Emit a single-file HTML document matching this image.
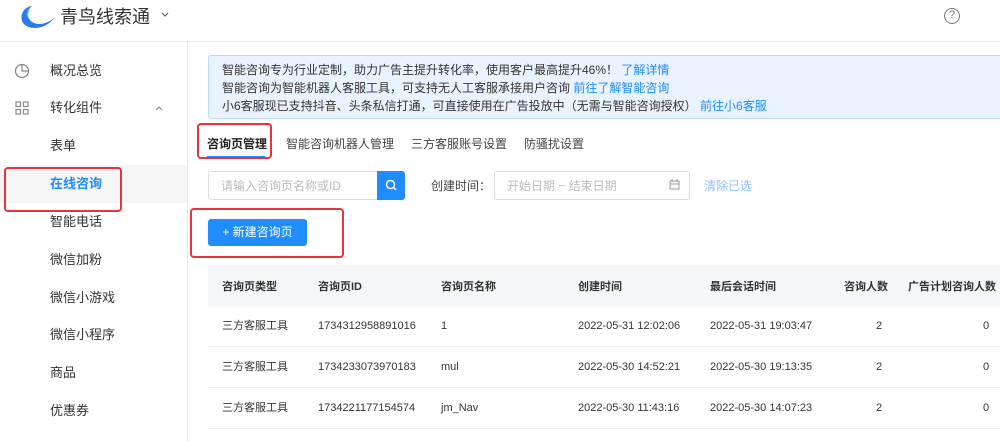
<!DOCTYPE html>
<html><head><meta charset="utf-8"><style>
*{margin:0;padding:0;box-sizing:border-box}
body{width:1000px;height:438px;overflow:hidden;background:#fff;font-family:"Liberation Sans","Noto Sans CJK SC",sans-serif;color:#333;position:relative;font-size:12px}
.a{position:absolute;white-space:nowrap;line-height:16px}
.red{position:absolute;border:2.5px solid #e8323c;border-radius:4px}
</style></head><body>
<div class="a" style="left:0;top:41px;width:1000px;border-top:1px solid #e8e8e8"></div>
<div class="a" style="left:187px;top:41px;height:400px;border-left:1px solid #e8e8e8"></div>
<svg class="a" style="left:18px;top:4px" width="38" height="26" viewBox="0 0 38 26"><path d="M14 2C6 3 2 10 4 17c3 7 13 9 22 5 5-2 9-6 11-9-5 5-14 9-21 6C9 16 8 8 14 2z" fill="#2a7cf0"/><path d="M14 2c-4 4-5 10-2 14-4-3-5-10 2-14z" fill="#5ab8ff"/></svg>
<div class="a" style="left:60px;top:5px;font-size:18px;line-height:24px;color:#333">青鸟线索通</div>
<svg class="a" style="left:161px;top:12px" width="8" height="6"><path d="M1 1l3 3 3-3" fill="none" stroke="#666" stroke-width="1.2"/></svg>
<div class="a" style="left:944px;top:8px;width:16px;height:16px;border:1.5px solid #777;border-radius:50%;font-size:11px;text-align:center;line-height:13px;color:#777">?</div>
<svg class="a" style="left:14px;top:63px" width="16" height="16"><circle cx="8" cy="8" r="6.5" fill="none" stroke="#888" stroke-width="1.3"/><path d="M8 1.5V8H14.5" fill="none" stroke="#888" stroke-width="1.3"/></svg>
<div class="a" style="left:50px;top:63px;font-size:13px">概况总览</div>
<svg class="a" style="left:15px;top:101px" width="14" height="14"><g fill="none" stroke="#888" stroke-width="1.2"><rect x="1" y="1" width="4.5" height="4.5"/><rect x="8.5" y="1" width="4.5" height="4.5"/><rect x="1" y="8.5" width="4.5" height="4.5"/><rect x="8.5" y="8.5" width="4.5" height="4.5"/></g></svg>
<div class="a" style="left:50px;top:100px;font-size:13px">转化组件</div>
<svg class="a" style="left:155px;top:105px" width="8" height="6"><path d="M1 5l3-3 3 3" fill="none" stroke="#888" stroke-width="1.1"/></svg>
<div class="a" style="left:50px;top:138px;font-size:13px">表单</div>
<div class="a" style="left:0;top:165px;width:187px;height:38px;background:#f5f5f5"></div>
<div class="a" style="left:50px;top:176px;font-size:13px;color:#1f8cff;font-weight:bold">在线咨询</div>
<div class="red" style="left:4px;top:167px;width:118px;height:45px"></div>
<div class="a" style="left:50px;top:214px;font-size:13px">智能电话</div>
<div class="a" style="left:50px;top:252px;font-size:13px">微信加粉</div>
<div class="a" style="left:50px;top:290px;font-size:13px">微信小游戏</div>
<div class="a" style="left:50px;top:327px;font-size:13px">微信小程序</div>
<div class="a" style="left:50px;top:365px;font-size:13px">商品</div>
<div class="a" style="left:50px;top:403px;font-size:13px">优惠券</div>
<div class="a" style="left:208px;top:55px;width:800px;height:64px;background:#e8f3ff;border:1px solid #b9dbff;border-radius:3px"></div>
<div class="a" style="left:222px;top:61px;line-height:18px;font-size:12px;color:#333">智能咨询专为行业定制，助力广告主提升转化率，使用客户最高提升46%！ <span style="color:#1f8cff">了解详情</span><br>智能咨询为智能机器人客服工具，可支持无人工客服承接用户咨询 <span style="color:#1f8cff">前往了解智能咨询</span><br>小6客服现已支持抖音、头条私信打通，可直接使用在广告投放中（无需与智能咨询授权） <span style="color:#1f8cff">前往小6客服</span></div>
<div class="a" style="left:207px;top:136px;font-size:12px;font-weight:bold;color:#222">咨询页管理</div>
<div class="a" style="left:207px;top:156px;width:58px;border-top:2px solid #1f8cff"></div>
<div class="red" style="left:197px;top:123px;width:75px;height:36px"></div>
<div class="a" style="left:286px;top:136px;font-size:12px;color:#444">智能咨询机器人管理</div>
<div class="a" style="left:411px;top:136px;font-size:12px;color:#444">三方客服账号设置</div>
<div class="a" style="left:524px;top:136px;font-size:12px;color:#444">防骚扰设置</div>
<div class="a" style="left:208px;top:171px;width:170px;height:29px;border:1px solid #ddd;border-radius:3px 0 0 3px"></div>
<div class="a" style="left:221px;top:178px;font-size:12px;color:#bbb">请输入咨询页名称或ID</div>
<div class="a" style="left:377px;top:171px;width:28px;height:29px;background:#1f8cff;border-radius:0 3px 3px 0"></div>
<svg class="a" style="left:385px;top:179px" width="12" height="12"><circle cx="5.5" cy="5.5" r="4" fill="none" stroke="#fff" stroke-width="1.4"/><path d="M8.5 8.5L11 11" stroke="#fff" stroke-width="1.4"/></svg>
<div class="a" style="left:431px;top:178px;font-size:12px;color:#444">创建时间：</div>
<div class="a" style="left:494px;top:171px;width:196px;height:29px;border:1px solid #ddd;border-radius:3px"></div>
<div class="a" style="left:507px;top:178px;font-size:12px;color:#bbb">开始日期 ~ 结束日期</div>
<svg class="a" style="left:669px;top:179px" width="11" height="11"><rect x="1" y="2" width="9" height="8" fill="none" stroke="#999"/><path d="M1 5h9M3 0v3M8 0v3" stroke="#999"/></svg>
<div class="a" style="left:704px;top:178px;font-size:12px;color:#8cc4ff">清除已选</div>
<div class="a" style="left:208px;top:219px;width:99px;height:27px;background:#1f8cff;border-radius:3px;color:#fff;font-size:12px;text-align:center;line-height:27px">+ 新建咨询页</div>
<div class="red" style="left:190px;top:208px;width:154px;height:50px"></div>
<div class="a" style="left:208px;top:265px;width:800px;height:42px;background:#f5f6f7"></div>
<div class="a" style="left:208px;top:346px;width:800px;border-top:1px solid #eee"></div>
<div class="a" style="left:208px;top:387px;width:800px;border-top:1px solid #eee"></div>
<div class="a" style="left:208px;top:428px;width:800px;border-top:1px solid #eee"></div>
<div style="font-size:11px;color:#333">
<div class="a" style="left:222px;top:279px;font-weight:bold">咨询页类型</div>
<div class="a" style="left:318px;top:279px;font-weight:bold">咨询页ID</div>
<div class="a" style="left:441px;top:279px;font-weight:bold">咨询页名称</div>
<div class="a" style="left:578px;top:279px;font-weight:bold">创建时间</div>
<div class="a" style="left:710px;top:279px;font-weight:bold">最后会话时间</div>
<div class="a" style="left:844px;top:279px;font-weight:bold">咨询人数</div>
<div class="a" style="left:908px;top:279px;font-weight:bold">广告计划咨询人数</div>
<div class="a" style="left:222px;top:318px">三方客服工具</div><div class="a" style="left:318px;top:318px">1734312958891016</div><div class="a" style="left:441px;top:318px">1</div><div class="a" style="left:578px;top:318px">2022-05-31 12:02:06</div><div class="a" style="left:710px;top:318px">2022-05-31 19:03:47</div><div class="a" style="left:876px;top:318px">2</div><div class="a" style="left:983px;top:318px">0</div>
<div class="a" style="left:222px;top:359px">三方客服工具</div><div class="a" style="left:318px;top:359px">1734233073970183</div><div class="a" style="left:441px;top:359px">mul</div><div class="a" style="left:578px;top:359px">2022-05-30 14:52:21</div><div class="a" style="left:710px;top:359px">2022-05-30 19:13:35</div><div class="a" style="left:876px;top:359px">2</div><div class="a" style="left:983px;top:359px">0</div>
<div class="a" style="left:222px;top:400px">三方客服工具</div><div class="a" style="left:318px;top:400px">1734221177154574</div><div class="a" style="left:441px;top:400px">jm_Nav</div><div class="a" style="left:578px;top:400px">2022-05-30 11:43:16</div><div class="a" style="left:710px;top:400px">2022-05-30 14:07:23</div><div class="a" style="left:876px;top:400px">2</div><div class="a" style="left:983px;top:400px">0</div>
</div>
</body></html>
